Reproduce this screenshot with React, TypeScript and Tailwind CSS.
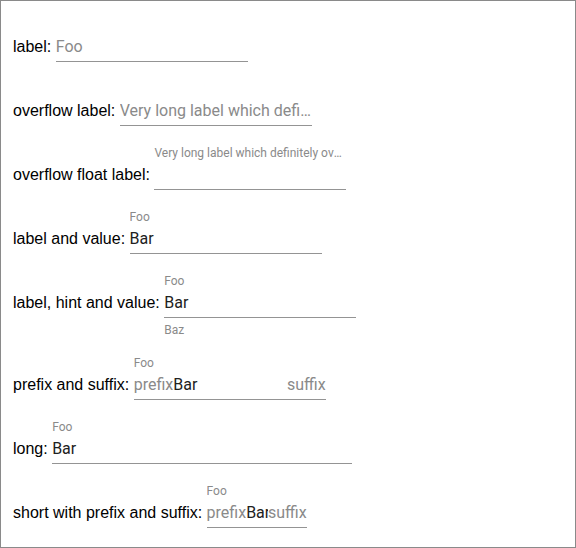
import React from 'react';

type FieldProps = {
  label: string;
  floatLabel?: string;
  placeholder?: string;
  value?: string;
  hint?: string;
  prefix?: string;
  suffix?: string;
  width?: string;
};

const LONG = 'Very long label which definitely overflows the available width of the field';

function Row({ label, floatLabel, placeholder, value, hint, prefix, suffix, width = 'w-[192px]' }: FieldProps) {
  return (
    <div className="flex items-start pb-[18px]">
      <span className="pt-[21px] leading-5 text-[16px] text-black whitespace-pre font-['Liberation_Sans',Arial,sans-serif]">
        {label + ' '}
      </span>
      <div className={`${width} flex flex-col font-['Roboto',sans-serif]`}>
        <div className="h-4 mt-[1px] mb-[4px] text-[12px] leading-4 text-[#8a8a8a] truncate">{floatLabel}</div>
        <div className="flex items-baseline h-[25px] pb-[4px] border-b border-[#949494] text-[16px] leading-5">
          {prefix && <span className="text-[#8a8a8a] shrink-0">{prefix}</span>}
          <span className="flex-1 min-w-0 overflow-hidden whitespace-nowrap">
            {value ? (
              <span className="text-[#212121]">{value}</span>
            ) : (
              <span className="block truncate text-[#8a8a8a]">{placeholder}</span>
            )}
          </span>
          {suffix && <span className="text-[#8a8a8a] shrink-0">{suffix}</span>}
        </div>
        {hint && <div className="mt-[7px] text-[12px] leading-[11px] text-[#8a8a8a]">{hint}</div>}
      </div>
    </div>
  );
}

export default function App() {
  return (
    <div className="w-[576px] h-[548px] bg-white border border-[#8a8a8a] pt-[15px] pl-[12px]">
      <Row label="label:" placeholder="Foo" />
      <Row label="overflow label:" placeholder={LONG} />
      <Row label="overflow float label:" floatLabel={LONG} />
      <Row label="label and value:" floatLabel="Foo" value="Bar" />
      <Row label="label, hint and value:" floatLabel="Foo" value="Bar" hint="Baz" />
      <Row label="prefix and suffix:" floatLabel="Foo" value="Bar" prefix="prefix" suffix="suffix" />
      <Row label="long:" floatLabel="Foo" value="Bar" width="w-[300px]" />
      <Row label="short with prefix and suffix:" floatLabel="Foo" value="Bar" prefix="prefix" suffix="suffix" width="w-[100px]" />
    </div>
  );
}
